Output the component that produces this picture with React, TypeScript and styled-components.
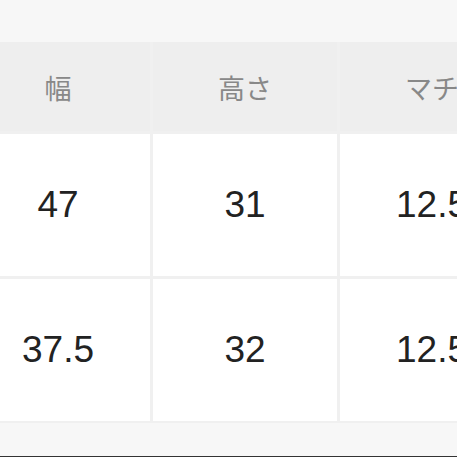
import styled, { createGlobalStyle } from "styled-components";

const GlobalStyle = createGlobalStyle`
  html, body {
    margin: 0;
    padding: 0;
    background: #f7f7f7;
  }
  body {
    font-family: "Liberation Sans", "Noto Sans CJK JP", sans-serif;
  }
`;

const Page = styled.div`
  width: 457px;
  height: 457px;
  overflow: hidden;
  display: flex;
  flex-direction: column;
  background: #f7f7f7;
  border-bottom: 1px solid #333;
  box-sizing: border-box;
`;

const TopBand = styled.div`
  height: 42px;
  flex: none;
`;

const Table = styled.div`
  display: grid;
  grid-template-columns: repeat(3, 184px);
  grid-template-rows: 89px 142px 142px;
  gap: 3px;
  margin-left: -34px;
  width: 558px;
  background: #f0f0f0;
  border-bottom: 2px solid #f0f0f0;
  flex: none;
`;

const HeadCell = styled.div`
  display: flex;
  align-items: center;
  justify-content: center;
  background: #eeeeee;
  color: #888888;
  font-family: "Noto Sans CJK JP", sans-serif;
  font-size: 27px;
  padding-top: 2px;
`;

const Cell = styled.div`
  display: flex;
  align-items: center;
  justify-content: center;
  background: #ffffff;
  color: #222222;
  font-family: "Liberation Sans", sans-serif;
  font-size: 37px;
`;

const headers = ["幅", "高さ", "マチ"];
const rows = [
  ["47", "31", "12.5"],
  ["37.5", "32", "12.5"],
];

export default function App() {
  return (
    <>
      <GlobalStyle />
      <Page>
        <TopBand />
        <Table>
          {headers.map((h) => (
            <HeadCell key={h}>{h}</HeadCell>
          ))}
          {rows.map((r, i) =>
            r.map((v, j) => <Cell key={`${i}-${j}`}>{v}</Cell>)
          )}
        </Table>
      </Page>
    </>
  );
}
